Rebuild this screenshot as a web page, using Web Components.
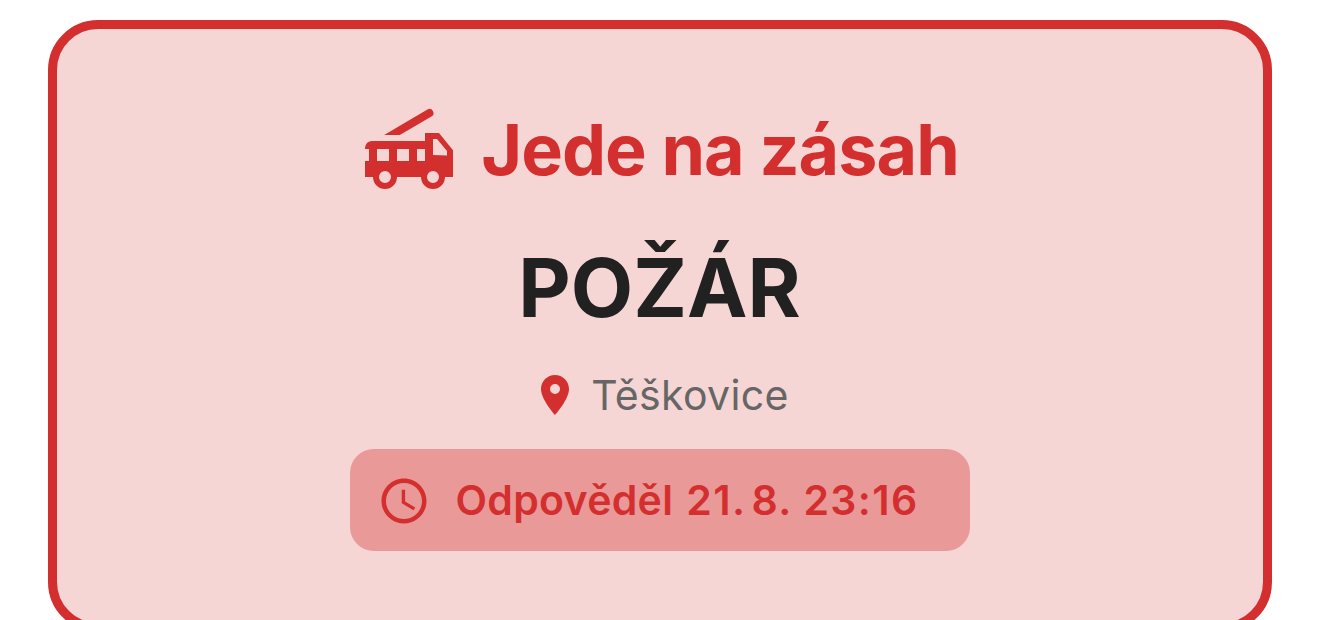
<!DOCTYPE html>
<html lang="cs"><head><meta charset="utf-8"><title>Jede na zásah</title>
<style>html,body{margin:0;height:620px;overflow:hidden;background:#fff}</style></head>
<body>
<status-card><status-title slot="title">Jede na zásah</status-title><event-name>POŽÁR</event-name><event-place>Těškovice</event-place><reply-chip>Odpověděl <span class="day">21.&#8239;</span><span>8. 23:16</span></reply-chip></status-card>
<script>
const define=(name,html)=>customElements.define(name,class extends HTMLElement{constructor(){super();this.attachShadow({mode:'open'}).innerHTML=html}});
define('status-card',`<style>:host{display:flex;flex-direction:column;align-items:center;box-sizing:border-box;width:1224px;height:612px;margin:20px auto 0;border:9px solid #d32f2f;border-radius:50px;background:#f6d6d5;padding-top:71px;font-family:Inter,sans-serif;color:#d32f2f}</style><slot name="title"></slot><slot></slot>`);
define('status-title',`<style>:host{display:flex;align-items:center;height:98px;padding-bottom:2px;gap:24px;font-weight:700;font-size:70px;letter-spacing:-.95px;line-height:100px;white-space:nowrap}span{padding-top:2px}svg{width:96px;height:96px;flex:none}</style><svg viewBox="0 0 24 24" fill="currentColor"><path fill-rule="evenodd" d="M5.8 8.5 16.6 2.1a1 1 0 0 1 1 1.75L9.7 8.5zM16 8h3.5L23 12.3V19h-2a3 3 0 0 1-6 0H9a3 3 0 0 1-6 0H1v-4h1v-3H1c0-1.1.7-2 1.7-2H16zM4 12v3h3v-3zM9 12v3h3v-3zM14 12v3h2v-3zM18 9.5v4l3.5.1v-1.1L19 9.5zM6 17.5a1.5 1.5 0 1 0 0 3 1.5 1.5 0 0 0 0-3zM18 17.5a1.5 1.5 0 1 0 0 3 1.5 1.5 0 0 0 0-3z"/></svg><span><slot></slot></span>`);
define('event-name',`<style>:host{display:block;margin-top:38px;padding-right:1px;font-size:81px;font-weight:700;line-height:100px;color:#212121}</style><slot></slot>`);
define('event-place',`<style>:host{display:flex;align-items:center;gap:12px;margin-top:27px;height:60px;font-size:41px;letter-spacing:.35px;line-height:60px;color:#666}svg{width:48px;height:48px;color:#d32f2f}</style><svg viewBox="0 0 24 24" fill="currentColor"><path d="M12 2C8.13 2 5 5.13 5 9c0 5.25 7 13 7 13s7-7.75 7-13c0-3.87-3.13-7-7-7zm0 9.5a2.5 2.5 0 0 1 0-5 2.5 2.5 0 0 1 0 5z"/></svg><span><slot></slot></span>`);
define('reply-chip',`<style>:host{display:flex;align-items:center;box-sizing:border-box;margin-top:24px;width:620px;height:102px;padding-left:27px;border-radius:24px;background:#e99998;font-size:41px;letter-spacing:.3px;font-weight:600;gap:24.5px;white-space:nowrap}::slotted(span){letter-spacing:1.35px}::slotted(.day){margin-left:2.5px;margin-right:-3px}svg{width:54px;height:54px;flex:none;margin-top:1px}</style><svg viewBox="0 0 24 24" fill="currentColor"><path d="M11.99 2C6.47 2 2 6.48 2 12s4.47 10 9.99 10C17.52 22 22 17.52 22 12S17.52 2 11.99 2zM12 20c-4.42 0-8-3.58-8-8s3.58-8 8-8 8 3.58 8 8-3.58 8-8 8zm.5-13H11v6l5.25 3.15.75-1.23-4.5-2.67z"/></svg><span><slot></slot></span>`);
</script></body></html>
